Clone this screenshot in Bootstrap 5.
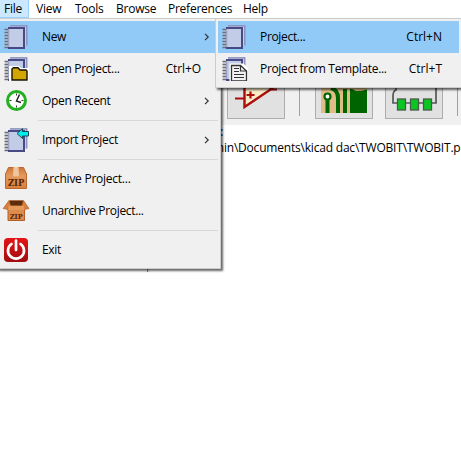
<!DOCTYPE html>
<html lang="en">
<head>
<meta charset="utf-8">
<meta name="viewport" content="width=device-width, initial-scale=1">
<title>KiCad</title>
<link href="https://cdn.jsdelivr.net/npm/bootstrap@5.3.0/dist/css/bootstrap.min.css" rel="stylesheet">
<style>
html,body{height:100%;overflow:hidden}
body{font:12px/16px "Open Sans","Noto Sans",sans-serif;color:#000;background:#fff;letter-spacing:-.33px}
.menubar{height:18px;background:#fff}
.menubar .nav-link{color:#000;padding:0 4px;height:18px;line-height:18px;white-space:nowrap;letter-spacing:-.25px}
.menubar .nav-link.active{background:#cce8ff;border-right:1px solid #99d1ff;border-bottom:1px solid #99d1ff}
.toolstrip{height:107px;background:#f0f0f0;padding:42px 0 7px 227px}
.tool{width:58px;height:59px;background:#e1e1e1;border:1px solid #adadad;flex:none}
.tool svg{display:block}
.rule{width:1px;height:56px;background:#a0a0a0;flex:none}
.tree-title{color:#003399;height:14px;padding-left:220px;line-height:14px;font-weight:600}
.path{padding-left:213px;line-height:18px;white-space:nowrap;letter-spacing:-.2px}
.splitter{left:147px;top:266px;width:3px;height:6px;background:#f0f0f0;border-left:1px solid #828790}
.popup{position:absolute;background:#f0f0f0;border:1px solid #ccc;padding:2px;box-shadow:2px 2px 2px rgba(0,0,0,.6)}
.popup-file{left:-3px;top:18px;width:224px;height:251px}
.popup-new{left:215px;top:18px;width:248px;height:70px}
.entry{height:32px;white-space:nowrap;padding-left:4px}
.entry.hot{background:#91c9f7}
.popup-new .entry.hot{margin-right:1px}
.popup-new .entry.hot .key{margin-right:17px}
.entry .pic{width:26px;height:24px;flex:none;margin-right:12px}
.entry .key{margin-left:auto;margin-right:18px;letter-spacing:0}
.popup-file .entry .key{margin-right:17px;letter-spacing:-.1px}
.chev{width:6px;height:8px;margin-left:auto;margin-right:8px}
.split{height:7px;padding:3px 0 0 38px}
.split div{height:1px;background:#d7d7d7}
</style>
<script src="https://cdn.jsdelivr.net/npm/bootstrap@5.3.0/dist/js/bootstrap.bundle.min.js"></script>
</head>
<body>
<svg width="0" height="0" class="position-absolute">
<defs>
<linearGradient id="box" x1="0" y1="0" x2="0" y2="1"><stop offset="0" stop-color="#cf7438"/><stop offset=".4" stop-color="#e5995c"/><stop offset="1" stop-color="#d5803f"/></linearGradient>
<linearGradient id="red" x1="0" y1="0" x2="0" y2="1"><stop offset="0" stop-color="#e51316"/><stop offset="1" stop-color="#a00d12"/></linearGradient>
<symbol id="book" viewBox="0 0 26 24">
<path d="M6 .5H23V20.500H21V2H6Z" fill="#c5cee8"/>
<path d="M6 .8H22.800V20.500" fill="none" stroke="#8186b5" stroke-width="1.2"/>
<path d="M4 3H20V23H4" fill="#c2cce6" stroke="#484a85" stroke-width="2"/>
<path d="M4.500 4V22" stroke="#9aa2c4" stroke-width="1.500"/>
<path d="M.5 4.5h3.500M.5 7.5h3.500M.5 10.5h3.500M.5 13.5h3.500M.5 16.5h3.500M.5 19.5h3.500M.5 22.500h3.500" stroke="#6c6c74" stroke-width="1.6"/>
<path d="M1 6h2.500M1 9h2.500M1 12h2.500M1 15h2.500M1 18h2.500M1 21h2.500" stroke="#b0b0b6" stroke-width="1"/>
</symbol>
</defs>
</svg>

<nav class="menubar d-flex">
<a class="nav-link active" style="width:29px">File</a><a class="nav-link" style="width:39px;padding-left:7px">View</a><a class="nav-link" style="width:41px;padding-left:7px">Tools</a><a class="nav-link" style="width:52px;padding-left:7px">Browse</a><a class="nav-link" style="width:76px;padding-left:7px">Preferences</a><a class="nav-link" style="padding-left:6px">Help</a>
</nav>

<div class="toolstrip d-flex">
<div class="tool"><svg width="56" height="56" viewBox="0 0 56 56"><path d="M16.500 8V46L44 27.500Z" fill="#f8ecc8" stroke="#ab0c0c" stroke-width="2.400"/><path d="M7 37.500H16M41 28.500H49M18.500 34h8M22.500 30.500v7" stroke="#ab0c0c" stroke-width="2.200"/></svg></div>
<div class="rule" style="margin-left:14px"></div>
<div class="tool" style="margin-left:15px"><svg width="56" height="56" viewBox="0 0 56 56"><path d="M5 5H51V52H5Z" fill="#dfbd87"/><path d="M34 28H51V52H34ZM27 28h4V52h-4Z" fill="#006400"/><path d="M11.500 35V52" stroke="#006400" stroke-width="4"/><path d="M15 27Q22 29 22 37V52" stroke="#006400" stroke-width="4" fill="none"/><path d="M34 27H51V28.500Q46 30 40 30Z" fill="#dfbd87"/><circle cx="11.500" cy="35.500" r="3" fill="#fff" stroke="#006400" stroke-width="2.200"/></svg></div>
<div class="tool" style="margin-left:12px"><svg width="56" height="56" viewBox="0 0 56 56"><path d="M10 24V29Q7 30 7 35V42H50V18" fill="none" stroke="#555" stroke-width="1.700"/><g fill="#0bc622" stroke="#4b5b4b" stroke-width="1.300"><rect x="11.500" y="38" width="8" height="11"/><rect x="24.500" y="38" width="8" height="11"/><rect x="37.500" y="38" width="8" height="11"/></g></svg></div>
<div class="rule" style="margin-left:14px"></div>
</div>
<div class="tree-title">:</div>
<div class="path">min\Documents\kicad dac\TWOBIT\TWOBIT.pro</div>
<div class="splitter position-absolute"></div>

<div class="popup popup-file">
<div class="entry hot d-flex align-items-center"><svg class="pic"><use href="#book" width="26" height="24"/></svg><span>New</span><svg class="chev" viewBox="0 0 6 8"><path d="M1 .8 4.200 4 1 7.200" fill="none" stroke="#333" stroke-width="1.200"/></svg></div>
<div class="entry d-flex align-items-center"><svg class="pic" viewBox="0 0 26 24"><use href="#book" width="26" height="24"/><path d="M7 11h7l2 2h7v10H7z" fill="#fff" stroke="#fff" stroke-width="4"/><path d="M8 23V12L9.500 10.700H14L16 13H22L23 14V23Z" fill="#d3a500" stroke="#171200" stroke-width="1.400"/></svg><span>Open Project...</span><span class="key">Ctrl+O</span></div>
<div class="entry d-flex align-items-center"><svg class="pic" viewBox="0 0 26 24"><circle cx="12.500" cy="11.500" r="9" fill="#fff" stroke="#23b023" stroke-width="3"/><path d="M15.500 5.500 12.500 12 17 13.500" fill="none" stroke="#222" stroke-width="1.500"/><path d="M12.500 4.500v2M12.500 16.500v2M5.500 11.500h2M17.500 11.500h2" stroke="#333"/></svg><span>Open Recent</span><svg class="chev" viewBox="0 0 6 8"><path d="M1 .8 4.200 4 1 7.200" fill="none" stroke="#333" stroke-width="1.200"/></svg></div>
<div class="split"><div></div></div>
<div class="entry d-flex align-items-center"><svg class="pic" viewBox="0 0 26 24"><use href="#book" width="26" height="24"/><path d="M13 5.500 18.500 .7V3.500H24.500V8H18.500V10.500Z" fill="#00f0f0" stroke="#174b54"/></svg><span>Import Project</span><svg class="chev" viewBox="0 0 6 8"><path d="M1 .8 4.200 4 1 7.200" fill="none" stroke="#333" stroke-width="1.200"/></svg></div>
<div class="split"><div></div></div>
<div class="entry d-flex align-items-center"><svg class="pic" viewBox="0 0 26 24"><path d="M4.500 .500H19.500L22.500 7V21.500H1.500V7Z" fill="url(#box)" stroke="#bd672f"/><path d="M9.500 0H14.500L15 8.500 13.500 10 12 8.500 10.500 10 9 8.500Z" fill="#edc6a0"/><text x="12.200" y="19" text-anchor="middle" textLength="16.500" lengthAdjust="spacingAndGlyphs" font-family="DejaVu Serif, serif" font-size="9" font-weight="bold" letter-spacing="0" fill="#592506">ZIP</text></svg><span style="letter-spacing:-.25px">Archive Project...</span></div>
<div class="entry d-flex align-items-center"><svg class="pic overflow-visible" viewBox="0 0 26 24"><path d="M4 6H20.500V21.500H4Z" fill="#dc8b4b" stroke="#b45f27"/><path d="M5.500 1.500H19L21 7H3.500Z" fill="#5d2c0d" stroke="#b45f27" stroke-width=".600"/><path d="M5 1.500 -.8 9.500 4 10.500 6.500 6.500ZM19.500 1.500 25 9.500 20.500 10.500 18 6.500Z" fill="#d77f3e" stroke="#b45f27" stroke-width=".700"/><path d="M4.500 6.800H20L20.500 11H4Z" fill="#e59a5b"/><text x="12.200" y="20" text-anchor="middle" textLength="13" lengthAdjust="spacingAndGlyphs" font-family="DejaVu Serif, serif" font-size="8" font-weight="bold" letter-spacing="0" fill="#592506">ZIP</text></svg><span>Unarchive Project...</span></div>
<div class="split"><div></div></div>
<div class="entry d-flex align-items-center"><svg class="pic" viewBox="0 0 26 24"><rect width="24" height="24" rx="4" fill="url(#red)"/><path d="M7.500 6A8 8 0 1 0 16.500 6M12 2.500V12" fill="none" stroke="#fff" stroke-width="2.700" stroke-linecap="round"/></svg><span>Exit</span></div>
</div>

<div class="popup popup-new">
<div class="entry hot d-flex align-items-center"><svg class="pic"><use href="#book" width="26" height="24"/></svg><span>Project...</span><span class="key">Ctrl+N</span></div>
<div class="entry d-flex align-items-center"><svg class="pic" viewBox="0 0 26 24"><use href="#book" width="26" height="24"/><path d="M9 8H21L25 13V24H9Z" fill="#fff" stroke="#fff" stroke-width="3"/><path d="M9.500 8.500H18.500L24.500 14V24H9.500Z" fill="#f2f2f2" stroke="#333" stroke-width="1.300"/><path d="M18.500 8.500V14H24.500M12 11.500h5M12 14.500h5M12 17.500h10M12 20.500h10" fill="none" stroke="#333" stroke-width="1.200"/></svg><span>Project from Template...</span><span class="key">Ctrl+T</span></div>
</div>
</body>
</html>
